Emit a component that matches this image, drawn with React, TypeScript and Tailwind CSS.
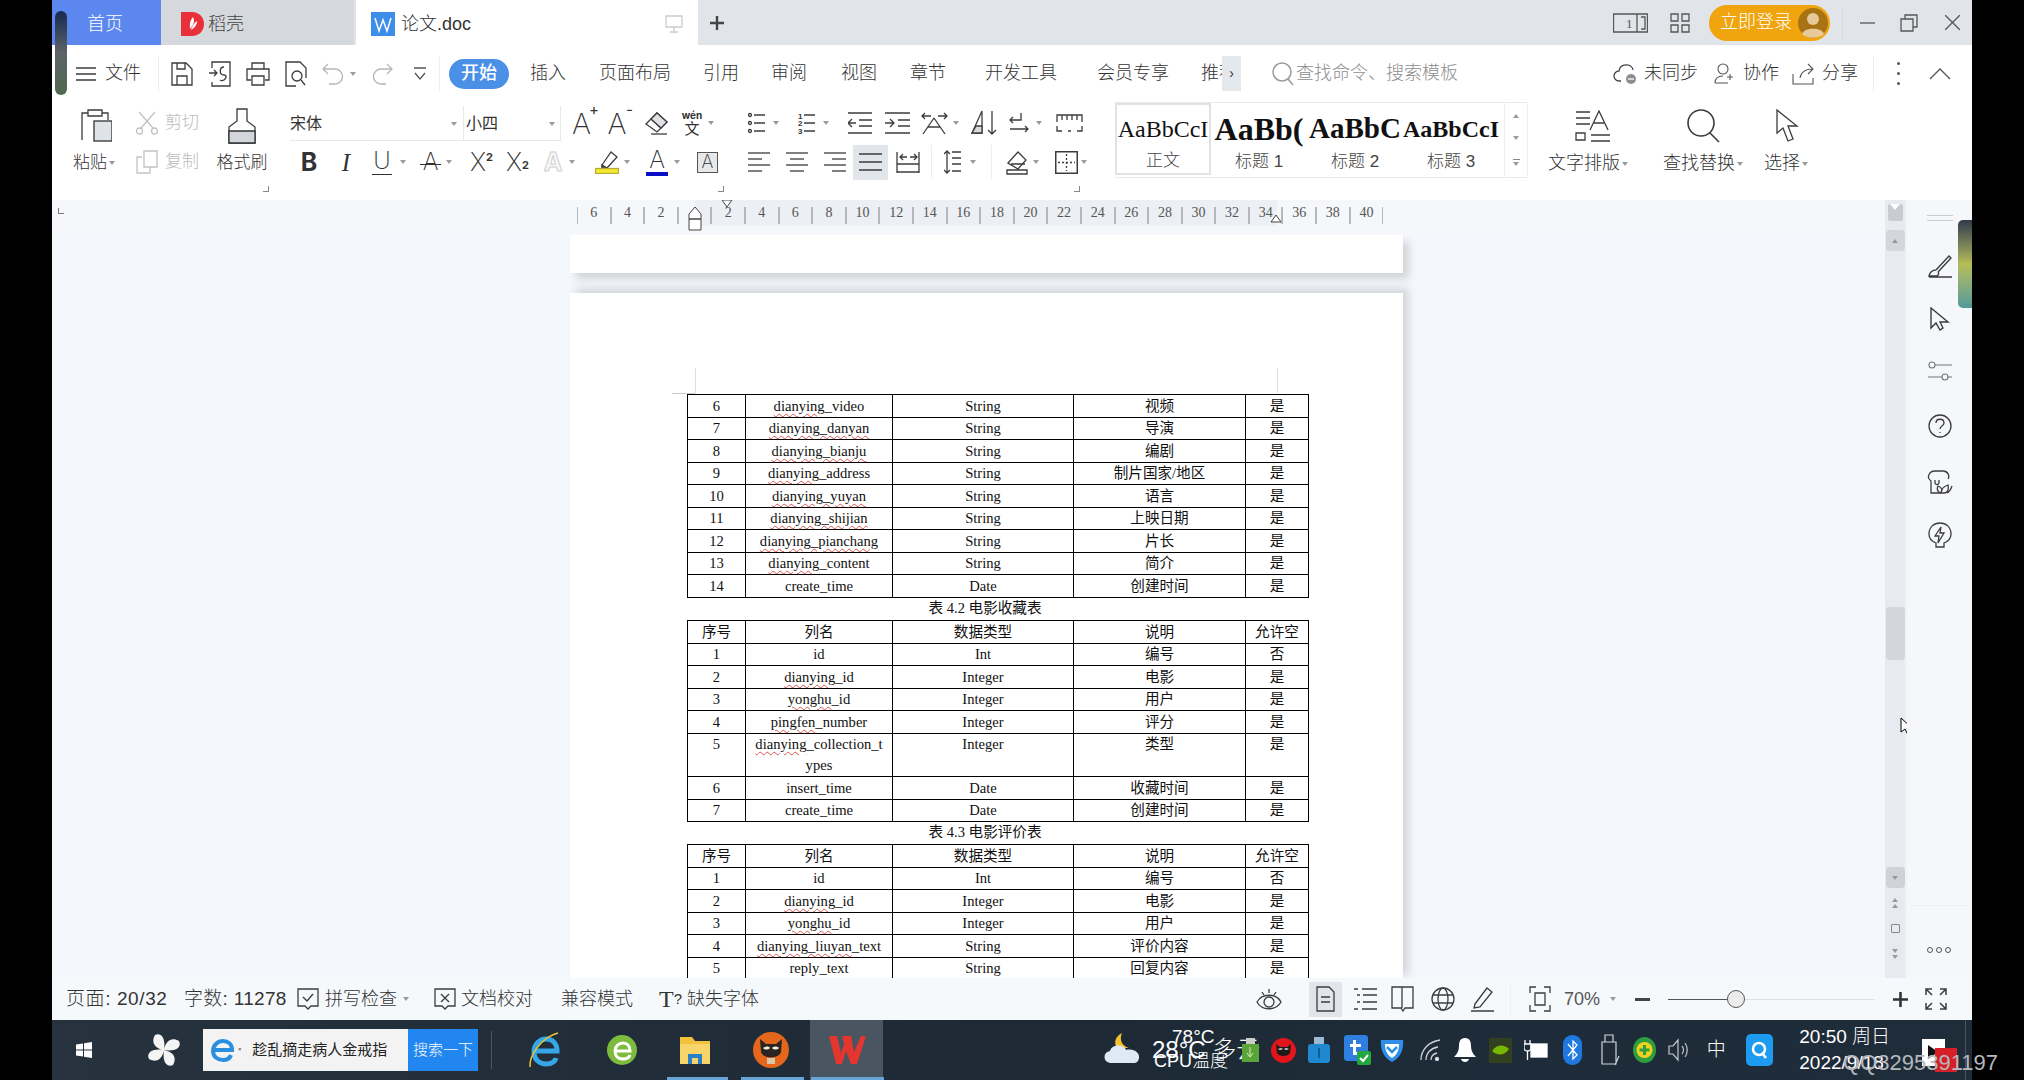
import { FC, ReactNode } from "react";
import clsx from "clsx";

const Svg: FC<{ w: number; h: number; className?: string; stroke?: string; sw?: number; children: ReactNode }> = ({
  w,
  h,
  className,
  stroke = "#3c3c3c",
  sw = 1.3,
  children,
}) => (
  <svg
    width={w}
    height={h}
    viewBox={`0 0 ${w} ${h}`}
    fill="none"
    stroke={stroke}
    strokeWidth={sw}
    className={clsx("shrink-0", className)}
  >
    {children}
  </svg>
);

const Caret: FC<{ className?: string }> = ({ className }) => (
  <span
    className={clsx(
      "h-0 w-0 shrink-0 border-x-[3.5px] border-t-[4px] border-x-transparent border-t-[#9a9a9a]",
      className,
    )}
  />
);

const Sep: FC<{ className?: string }> = ({ className }) => (
  <span className={clsx("h-[34px] w-px shrink-0 bg-[#eceef1]", className)} />
);

const Corner: FC<{ className?: string }> = ({ className }) => (
  <span className={clsx("absolute h-[6px] w-[6px] border-r border-b border-[#888]", className)} />
);

const Lines: FC<{ rows: [number, number][]; w?: number; h?: number }> = ({ rows, w = 22, h = 22 }) => (
  <Svg w={w} h={h}>
    {rows.map(([a, b], i) => (
      <path key={i} d={`M${a} ${2 + (i * (h - 4)) / (rows.length - 1)}H${b}`} />
    ))}
  </Svg>
);

const TitleBar = () => (
  <div className="flex h-[45px] items-stretch bg-[#e1e4e8]">
    <div className="flex w-[109px] items-center bg-[#5b87ee] pt-[3px] pl-[35px] text-[18px] font-light text-white">首页</div>
    <div className="flex w-[193px] items-center bg-[#d5d8dc] pt-[3px] pl-[20px] text-[18px] font-light text-[#444]">
      <svg width="23" height="26" viewBox="0 0 23 26" className="shrink-0">
        <path d="M0 1h11c7 0 12 5 12 12s-5 12-12 12H0z" fill="#e8303a" />
        <path d="M12 6c2 4 1 7-3 12 0-4-1-7 3-12zM16 10c0 4-2 6-6 9 1-4 3-7 6-9z" fill="#fff" />
      </svg>
      <span className="ml-[4px]">稻壳</span>
    </div>
    <div className="ml-[2px] flex w-[342px] items-center bg-white pt-[3px] pl-[15px] text-[18px] text-[#333]">
      <svg width="24" height="24" viewBox="0 0 24 24" className="shrink-0">
        <rect width="24" height="24" fill="#3d8ee8" />
        <path d="M4 6l4 13 4-11 4 11 4-13" fill="none" stroke="#fff" strokeWidth="1.5" />
      </svg>
      <span className="ml-[6px] font-light">论文.doc</span>
      <Svg w={18} h={18} stroke="#c8cbd0" className="ml-[194px]">
        <path d="M1 1h16v11H1zM9 12v4M5 17h8" />
      </Svg>
    </div>
    <div className="ml-[12px] flex items-center">
      <Svg w={14} h={14} sw={2.4} stroke="#444">
        <path d="M7 0v14M0 7h14" />
      </Svg>
    </div>
    <div className="ml-auto flex items-center pr-[12px]">
      <Svg w={35} h={20} className="mr-[22px]" stroke="#555">
        <path d="M.5 1h34v18H.5zM24 1v18M28 4h4v12h-4" />
        <text x="13" y="15" fontSize="13" fill="#555" stroke="none" fontFamily="Liberation Serif">1</text>
      </Svg>
      <Svg w={20} h={20} stroke="#555" className="mr-[19px]">
        <path d="M1 1h7v7H1zM12 1h7v7h-7zM1 12h7v7H1zM12 12h7v7h-7z" />
      </Svg>
      <div className="flex h-[36px] w-[121px] items-center rounded-full bg-[#f0a40e] pl-[11px] text-[18px] font-light text-white">
        立即登录
        <svg width="30" height="30" viewBox="0 0 30 30" className="ml-[6px] shrink-0">
          <circle cx="15" cy="15" r="15" fill="#a87413" />
          <circle cx="15" cy="11" r="6" fill="#e8c99a" />
          <path d="M4 26c2-7 20-7 22 0-5 5-17 5-22 0z" fill="#e8c99a" />
        </svg>
      </div>
      <span className="ml-[12px] h-[30px] w-px bg-[#d6d8dc]" />
      <Svg w={15} h={15} stroke="#555" className="ml-[17px]">
        <path d="M0 8h15" />
      </Svg>
      <Svg w={18} h={18} stroke="#555" className="ml-[25px]">
        <path d="M1 5h12v12H1zM5 5V1h12v12h-4" />
      </Svg>
      <Svg w={15} h={15} stroke="#555" className="ml-[27px]">
        <path d="M0 0l15 15M15 0L0 15" />
      </Svg>
    </div>
  </div>
);

const MenuItem: FC<{ className: string; children: ReactNode }> = ({ className, children }) => (
  <span className={clsx("shrink-0 font-light whitespace-nowrap", className)}>{children}</span>
);

const MenuBar = () => (
  <div className="flex h-[53px] items-center bg-white pt-[4px] text-[18px] text-[#333]">
    <Svg w={22} h={16} className="ml-[23px]" sw={1.6}>
      <path d="M1 2h20M1 8h20M1 14h20" />
    </Svg>
    <MenuItem className="ml-[8px]">文件</MenuItem>
    <Sep className="ml-[17px]" />
    <Svg w={24} h={24} className="ml-[11px]">
      <path d="M2 1h14l6 6v16H2zM7 23v-9h10v9M7 1v6h8V1" />
    </Svg>
    <Svg w={24} h={26} className="ml-[14px]">
      <path d="M4 7V1h18v24H4v-4M1 12h8M6 9l3 3-3 3M16 6c-5 0-5 8 0 8s0 8-4 5" />
    </Svg>
    <Svg w={24} h={24} className="ml-[14px]">
      <path d="M6 7V1h12v6M5 18H1V7h22v11h-4M6 14h12v9H6z" />
    </Svg>
    <Svg w={24} h={26} className="ml-[14px]">
      <path d="M12 25H2V1h14l6 6v10" />
      <circle cx="13" cy="15" r="5" />
      <path d="M17 19l4 5" />
    </Svg>
    <Svg w={22} h={22} stroke="#b4b7bb" className="ml-[14px]">
      <path d="M6 1L1 6l5 5M1 6h12a7 7 0 0 1 0 15H7" />
    </Svg>
    <Caret className="ml-[6px]" />
    <Svg w={20} h={22} stroke="#b4b7bb" className="ml-[17px]">
      <path d="M14 1l5 5-5 5M19 6H8a7 7 0 0 0 0 15h5" />
    </Svg>
    <Svg w={14} h={14} className="ml-[20px]" stroke="#555">
      <path d="M1 1h12M2 6l5 6 5-6" />
    </Svg>
    <Sep className="ml-[12px]" />
    <span className="ml-[9px] flex h-[30px] w-[60px] shrink-0 items-center justify-center rounded-full bg-[#4a90e6] font-medium text-white">
      开始
    </span>
    <MenuItem className="ml-[21px]">插入</MenuItem>
    <MenuItem className="ml-[33px]">页面布局</MenuItem>
    <MenuItem className="ml-[32px]">引用</MenuItem>
    <MenuItem className="ml-[32px]">审阅</MenuItem>
    <MenuItem className="ml-[34px]">视图</MenuItem>
    <MenuItem className="ml-[33px]">章节</MenuItem>
    <MenuItem className="ml-[39px]">开发工具</MenuItem>
    <MenuItem className="ml-[40px]">会员专享</MenuItem>
    <span className="ml-[32px] w-[21px] shrink-0 overflow-hidden font-light whitespace-nowrap">推荐</span>
    <span className="flex h-[35px] w-[19px] shrink-0 items-center justify-center bg-[#e4e7ec] text-[14px]">›</span>
    <Svg w={22} h={24} stroke="#9a9a9a" className="ml-[31px]" sw={1.5}>
      <circle cx="10" cy="10" r="9" />
      <path d="M16 17l5 6" />
    </Svg>
    <MenuItem className="ml-[2px] text-[#8d8d8d]">查找命令、搜索模板</MenuItem>
    <div className="ml-auto flex items-center pr-[21px]">
      <Svg w={25} h={22} stroke="#444">
        <path d="M8 18H6a5 5 0 0 1 0-10c1-8 13-8 14-1" />
        <circle cx="18" cy="16" r="5" fill="#8a8d92" stroke="none" />
        <path d="M15 16h6" stroke="#fff" />
      </Svg>
      <MenuItem className="ml-[6px]">未同步</MenuItem>
      <Svg w={22} h={22} stroke="#555" sw={1.1} className="ml-[15px]">
        <circle cx="10" cy="6" r="5" />
        <path d="M2 20c0-5 3-7 8-7M2 20h13M17 11v6M14 14h6" />
      </Svg>
      <MenuItem className="ml-[8px]">协作</MenuItem>
      <Svg w={24} h={22} stroke="#555" sw={1.1} className="ml-[13px]">
        <path d="M1 11v10h20v-6M8 15c1-6 6-9 12-9M16 1l5 5-5 5" />
      </Svg>
      <MenuItem className="ml-[6px]">分享</MenuItem>
      <Sep className="ml-[15px]" />
      <span className="ml-[23px] flex w-[3px] flex-col gap-[7px]">
        <i className="h-[3px] w-[3px] rounded-full bg-[#555]" />
        <i className="h-[3px] w-[3px] rounded-full bg-[#555]" />
        <i className="h-[3px] w-[3px] rounded-full bg-[#555]" />
      </span>
      <Svg w={22} h={12} stroke="#555" className="ml-[29px]">
        <path d="M1 11L11 1l10 10" />
      </Svg>
    </div>
  </div>
);

const Glyph: FC<{ className: string; children: ReactNode }> = ({ className, children }) => (
  <span className={clsx("relative flex shrink-0 items-center justify-center leading-none text-[#333]", className)}>
    {children}
  </span>
);

const FontGroup = () => (
  <div className="relative ml-[22px] w-[435px] shrink-0">
    <div className="flex h-[40px] items-center pt-[2px]">
      <div className="flex h-[35px] w-[173px] shrink-0 items-center justify-between border-b border-[#e8e8e8] pt-[2px] pr-[6px] text-[16px]">
        宋体
        <Caret />
      </div>
      <div className="flex h-[35px] w-[98px] shrink-0 items-center justify-between border-x border-b border-[#e8e8e8] pt-[2px] pr-[5px] pl-[2px] text-[16px]">
        小四
        <Caret />
      </div>
      <Glyph className="ml-[9px] w-[23px] font-['Inter'] text-[29px] font-extralight">
        A<sup className="absolute top-[1px] -right-[6px] text-[15px] font-normal">+</sup>
      </Glyph>
      <Glyph className="ml-[13px] w-[22px] font-['Inter'] text-[29px] font-extralight">
        A<sup className="absolute top-[1px] -right-[5px] text-[15px] font-normal">-</sup>
      </Glyph>
      <Svg w={24} h={24} className="ml-[17px]">
        <path d="M1 13L12 2l10 9-10 10zM6 8l10 9" />
        <path d="M12 2l10 9-6 6-10-9z" fill="#dde0e4" />
        <path d="M6 23h16" />
      </Svg>
      <span className="ml-[11px] flex w-[24px] shrink-0 flex-col items-center text-[#333]">
        <span className="font-['Inter'] text-[10px] leading-[11px] font-bold">wén</span>
        <span className="text-[15px] leading-[15px]">文</span>
      </span>
      <Caret className="ml-[4px]" />
    </div>
    <div className="flex h-[40px] items-center">
      <Glyph className="ml-[10px] w-[18px] font-['Inter'] text-[25px] font-bold">B</Glyph>
      <Glyph className="ml-[22px] w-[12px] font-['Liberation_Serif'] text-[25px] italic">I</Glyph>
      <Glyph className="ml-[20px] h-[26px] w-[20px] items-start border-b border-[#333] font-['Inter'] text-[24px] font-extralight">
        U
      </Glyph>
      <Caret className="ml-[8px]" />
      <Glyph className="ml-[14px] w-[21px] font-['Inter'] text-[24px] font-extralight">
        A<i className="absolute top-[14px] left-0 h-px w-[21px] bg-[#333]" />
      </Glyph>
      <Caret className="ml-[5px]" />
      <Glyph className="ml-[16px] w-[27px] font-['Inter'] text-[25px] font-extralight">
        X<sup className="text-[11px] font-bold">2</sup>
      </Glyph>
      <Glyph className="ml-[10px] w-[25px] font-['Inter'] text-[25px] font-extralight">
        X<sub className="text-[11px] font-bold">2</sub>
      </Glyph>
      <span className="ml-[13px] w-[20px] shrink-0 text-center font-['Inter'] text-[25px] leading-none font-bold text-[#f7f7f7] [-webkit-text-stroke:1px_#cfd1d4]">
        A
      </span>
      <Caret className="ml-[6px]" />
      <Svg w={24} h={24} className="ml-[20px]">
        <path d="M7 15L16 2l6 5-10 11-5-1z" />
        <path d="M7 15l5 3-2 1H7z" fill="#555" />
        <rect x="0.5" y="18.5" width="23" height="5" fill="#f2ea2e" stroke="#b9a93a" />
      </Svg>
      <Caret className="ml-[5px]" />
      <Glyph className="ml-[16px] h-[28px] w-[22px] items-start border-b-[4px] border-[#0b10c4] font-['Inter'] text-[24px] font-extralight">
        A
      </Glyph>
      <Caret className="ml-[6px]" />
      <Glyph className="ml-[17px] h-[21px] w-[21px] border border-[#555] bg-[#e6e8ea] font-['Inter'] text-[18px] font-extralight">
        A
      </Glyph>
    </div>
    <Corner className="top-[84px] right-[1px]" />
  </div>
);

const ParagraphGroup = () => (
  <div className="relative ml-[23px] w-[347px] shrink-0">
    <div className="flex h-[40px] items-center pt-[2px]">
      <Svg w={17} h={22}>
        <circle cx="2" cy="3" r="1.5" />
        <circle cx="2" cy="11" r="1.5" />
        <circle cx="2" cy="19" r="1.5" />
        <path d="M6 3h11M6 11h11M6 19h11" />
      </Svg>
      <Caret className="ml-[8px]" />
      <Svg w={17} h={22} className="ml-[19px]">
        <path d="M6 3h11M6 11h11M6 19h11" />
        <text x="0" y="7" fontSize="8" fontWeight="700" stroke="none" fill="#333">1</text>
        <text x="0" y="14" fontSize="8" fontWeight="700" stroke="none" fill="#333">2</text>
        <text x="0" y="22" fontSize="8" fontWeight="700" stroke="none" fill="#333">3</text>
      </Svg>
      <Caret className="ml-[8px]" />
      <Svg w={24} h={22} className="ml-[19px]">
        <path d="M0 1h24M11 8h13M11 14h13M0 21h24M0 11h8M4 7l-4 4 4 4" />
      </Svg>
      <Svg w={25} h={22} className="ml-[13px]">
        <path d="M0 1h25M13 8h12M13 14h12M0 21h25M0 11h9M5 7l4 4-4 4" />
      </Svg>
      <Svg w={27} h={24} className="ml-[11px]">
        <path d="M1 5h9M4 2L1 5l3 3M17 5h9M23 2l3 3-3 3M13 7L2 23M13 7l11 16M7 16h12" />
      </Svg>
      <Caret className="ml-[5px]" />
      <Svg w={26} h={26} className="ml-[12px]">
        <path d="M11 1v22H1zM21 1v23M17 20l4 4 4-4" />
        <path d="M5 16h6v7H1z" fill="#d6d9dd" />
      </Svg>
      <Svg w={20} h={22} className="ml-[12px]">
        <path d="M12 1v7H1M4 5L1 8l3 3M1 17h18M16 14l3 3-3 3" />
      </Svg>
      <Caret className="ml-[7px]" />
      <Svg w={27} h={20} className="ml-[14px]">
        <path d="M1 9V2h25v7M6 2v5M11 2v5M16 2v5M21 2v5M1 13v5h5M26 13v5h-5M12 18h3" />
      </Svg>
    </div>
    <div className="flex h-[40px] items-center">
      <Lines rows={[[0, 22], [0, 14], [0, 22], [0, 14]]} />
      <Lines rows={[[16, 38], [20, 34], [16, 38], [20, 34]]} w={38} />
      <Lines rows={[[16, 38], [24, 38], [16, 38], [24, 38]]} w={38} />
      <span className="ml-[7px] flex h-[35px] w-[35px] shrink-0 items-center justify-center bg-[#e2e5ea]">
        <Svg w={23} h={20} sw={1.6}>
          <path d="M0 2h23M0 10h23M0 18h23" />
        </Svg>
      </span>
      <Svg w={24} h={24} className="ml-[8px]">
        <path d="M1 2v21M23 2v21M1 14h22M1 22h22M4 7h7M7 4L4 7l3 3M14 7h7M18 4l3 3-3 3" />
      </Svg>
      <Sep className="ml-[11px]" />
      <Svg w={17} h={26} className="ml-[12px]">
        <path d="M3 2v22M0 5l3-3 3 3M0 21l3 3 3-3M8 3h9M8 9h9M8 15h9M8 22h9" />
      </Svg>
      <Caret className="ml-[9px]" />
      <Sep className="ml-[15px]" />
      <Svg w={22} h={25} className="ml-[14px]">
        <path d="M2 13L12 2l8 8-8 9zM5 14h14M1 24v-4h20v4z" />
      </Svg>
      <Caret className="ml-[5px]" />
      <Svg w={23} h={23} className="ml-[16px]">
        <path d="M.7.7h21.6v21.6H.7z" strokeWidth="1.6" />
        <path d="M11.5 3v17M3 11.5h17" strokeDasharray="2 2" />
      </Svg>
      <Caret className="ml-[3px]" />
    </div>
    <Corner className="top-[84px] right-[15px]" />
  </div>
);

const StyleTile: FC<{ label: string; className: string; active?: boolean; children: string }> = ({
  label,
  className,
  active,
  children,
}) => (
  <div
    className={clsx(
      "flex h-[72px] w-[96px] shrink-0 flex-col items-center overflow-hidden",
      active && "border-2 border-[#e1e2e4]",
    )}
  >
    <div className={clsx("flex h-[46px] w-full items-center justify-center pt-[6px] font-['Liberation_Serif'] whitespace-nowrap text-[#111]", className)}>
      {children}
    </div>
    <span className="text-[17px] font-light text-[#444]">{label}</span>
  </div>
);

const Ribbon = () => (
  <div className="flex h-[102px] items-start bg-white pt-[4px] text-[#333]">
    <div className="ml-[19px] flex w-[46px] shrink-0 flex-col items-center">
      <Svg w={32} h={34} className="mt-[6px] ml-[3px]">
        <path d="M2 32V5h6M22 5h6v7M8 2h14v6H8z" />
        <rect x="14" y="13" width="18" height="20" fill="#dfe2e6" stroke="#333" />
      </Svg>
      <span className="mt-[8px] flex items-center text-[17px] font-light">
        粘贴
        <Caret className="ml-[2px]" />
      </span>
    </div>
    <div className="ml-[19px] w-[66px] shrink-0 text-[17px] font-light text-[#bbb]">
      <div className="flex h-[40px] items-center gap-[7px] pt-[2px]">
        <Svg w={22} h={24} stroke="#c0c2c5">
          <path d="M3 1l14 16M19 1L5 17" />
          <circle cx="3.5" cy="20" r="3" />
          <circle cx="18.5" cy="20" r="3" />
        </Svg>
        剪切
      </div>
      <div className="flex h-[40px] items-center gap-[7px]">
        <Svg w={22} h={24} stroke="#c0c2c5">
          <path d="M8 1h13v16H8zM6 7H1v16h13v-6" />
        </Svg>
        复制
      </div>
    </div>
    <div className="relative ml-[14px] flex w-[52px] shrink-0 flex-col items-center">
      <Svg w={28} h={36} className="mt-[6px]">
        <path d="M9 1h10v12l8 6v16H1V19l8-6z" />
        <path d="M1 23h26v12H1z" fill="#d3d6da" stroke="#333" />
      </Svg>
      <span className="mt-[6px] text-[17px] font-light whitespace-nowrap">格式刷</span>
      <Corner className="top-[84px] -right-[1px]" />
    </div>
    <FontGroup />
    <ParagraphGroup />
    <div className="ml-[20px] flex h-[76px] w-[413px] shrink-0 border-y border-[#eaeaea] border-r-0">
      <StyleTile label="正文" className="text-[24px]" active>
        AaBbCcI
      </StyleTile>
      <StyleTile label="标题 1" className="text-[32px] font-bold">
        AaBb(
      </StyleTile>
      <StyleTile label="标题 2" className="text-[29px] font-bold">
        AaBbC
      </StyleTile>
      <StyleTile label="标题 3" className="text-[24px] font-bold">
        AaBbCcI
      </StyleTile>
      <div className="ml-auto flex w-[24px] flex-col items-center justify-around border-x border-[#eee] py-[2px]">
        <Caret className="rotate-180" />
        <Caret />
        <span className="flex flex-col items-center gap-[2px]">
          <i className="h-px w-[7px] bg-[#888]" />
          <Caret />
        </span>
      </div>
    </div>
    <div className="ml-[22px] flex w-[76px] shrink-0 flex-col items-center">
      <Svg w={36} h={32} className="mt-[8px] ml-[10px]">
        <path d="M1 2h14M1 8h14M1 14h14M15 20L24 1l9 19M19 13h10" />
        <path d="M1 23h9v7H1zM16 25h19M16 31h19" />
      </Svg>
      <span className="mt-[8px] flex items-center text-[18px] font-light whitespace-nowrap">
        文字排版
        <Caret className="ml-[2px]" />
      </span>
    </div>
    <div className="ml-[38px] flex w-[78px] shrink-0 flex-col items-center">
      <Svg w={34} h={34} sw={1.6} className="mt-[7px] ml-[2px]">
        <circle cx="14" cy="14" r="13" />
        <path d="M23 24l9 9" />
      </Svg>
      <span className="mt-[7px] flex items-center text-[18px] font-light whitespace-nowrap">
        查找替换
        <Caret className="ml-[2px]" />
      </span>
    </div>
    <div className="ml-[22px] flex w-[44px] shrink-0 flex-col items-center">
      <Svg w={24} h={34} className="mt-[7px] ml-[2px]">
        <path d="M2 1v23l6-5 5 13 5-2-5-13h9z" />
      </Svg>
      <span className="mt-[7px] flex items-center text-[18px] font-light whitespace-nowrap">
        选择
        <Caret className="ml-[2px]" />
      </span>
    </div>
  </div>
);

const RULER = ["6", "4", "2", "", "2", "4", "6", "8", "10", "12", "14", "16", "18", "20", "22", "24", "26", "28", "30", "32", "34", "36", "38", "40"];

const Ruler = () => (
  <div className="relative flex h-[35px] shrink-0 items-start bg-[#f5f7fa] pl-[525px]">
    <span className="absolute top-[8px] left-[6px] h-[6px] w-[6px] border-b border-l border-[#777]" />
    <span className="absolute top-0 left-[643px] h-[26px] w-[582px] bg-[#eceff3]" />
    {RULER.map((n, i) => (
      <span
        key={i}
        className="relative mt-[7px] flex h-[17px] w-[33.6px] shrink-0 items-start justify-center border-x border-[#b5b9bf] font-['Liberation_Serif'] text-[14px] leading-[12px] text-[#555]"
      >
        {n}
      </span>
    ))}
    <Svg w={14} h={26} className="absolute top-[6px] left-[636px]" stroke="#444" sw={1}>
      <path d="M7 1l6 7v5H1V8zM1 13h12v11H1z" fill="#fff" />
    </Svg>
    <Svg w={12} h={8} className="absolute top-0 left-[669px]" stroke="#444" sw={1}>
      <path d="M1 0h10L6 7z" fill="#fff" />
    </Svg>
    <Svg w={12} h={8} className="absolute top-[15px] left-[1218px]" stroke="#444" sw={1}>
      <path d="M1 7h10L6 0z" fill="#fff" />
    </Svg>
  </div>
);

type Row = [string, string, string, string, string];

const Name: FC<{ value: string }> = ({ value }) => {
  const [wavy, rest] = value.split("|");
  if (rest === undefined) return <>{value}</>;
  return (
    <>
      <span className="underline decoration-[#d9534f] decoration-wavy decoration-1 underline-offset-[2px]">{wavy}</span>
      {rest}
    </>
  );
};

const DocTable: FC<{ rows: Row[] }> = ({ rows }) => (
  <table className="w-[621px] table-fixed border-collapse border border-black text-center">
    <colgroup>
      <col className="w-[58px]" />
      <col className="w-[147px]" />
      <col className="w-[181px]" />
      <col className="w-[172px]" />
      <col className="w-[63px]" />
    </colgroup>
    <tbody>
      {rows.map((row, i) => {
        const tall = row[1].includes("\n");
        return (
          <tr key={i} className={tall ? "h-[43px]" : i % 2 === 0 ? "h-[23px]" : "h-[22px]"}>
            {row.map((cell, j) => (
              <td
                key={j}
                className={clsx("border border-black p-0", tall ? "align-top leading-[21px]" : "pb-[1px] align-middle leading-[20px]")}
              >
                {cell.split("\n").map((line, k) => (
                  <div key={k}>
                    <Name value={line} />
                  </div>
                ))}
              </td>
            ))}
          </tr>
        );
      })}
    </tbody>
  </table>
);

const HEAD: Row = ["序号", "列名", "数据类型", "说明", "允许空"];

const T1: Row[] = [
  ["6", "dianying|_video", "String", "视频", "是"],
  ["7", "dianying_danyan|", "String", "导演", "是"],
  ["8", "dianying_bianju|", "String", "编剧", "是"],
  ["9", "dianying|_address", "String", "制片国家/地区", "是"],
  ["10", "dianying_yuyan|", "String", "语言", "是"],
  ["11", "dianying_shijian|", "String", "上映日期", "是"],
  ["12", "dianying_pianchang|", "String", "片长", "是"],
  ["13", "dianying|_content", "String", "简介", "是"],
  ["14", "create_time", "Date", "创建时间", "是"],
];

const T2: Row[] = [
  HEAD,
  ["1", "id", "Int", "编号", "否"],
  ["2", "dianying|_id", "Integer", "电影", "是"],
  ["3", "yonghu|_id", "Integer", "用户", "是"],
  ["4", "pingfen|_number", "Integer", "评分", "是"],
  ["5", "dianying|_collection_t\nypes", "Integer", "类型", "是"],
  ["6", "insert_time", "Date", "收藏时间", "是"],
  ["7", "create_time", "Date", "创建时间", "是"],
];

const T3: Row[] = [
  HEAD,
  ["1", "id", "Int", "编号", "否"],
  ["2", "dianying|_id", "Integer", "电影", "是"],
  ["3", "yonghu|_id", "Integer", "用户", "是"],
  ["4", "dianying_liuyan|_text", "String", "评价内容", "是"],
  ["5", "reply_text", "String", "回复内容", "是"],
];

const Caption: FC<{ children: string }> = ({ children }) => (
  <div className="h-[22px] w-[621px] pr-[25px] text-center leading-[20px]">{children}</div>
);

const Document = () => (
  <div className="flex min-h-0 flex-1 flex-col overflow-hidden bg-[#f4f7fb] pl-[518px]">
    <div className="h-[38px] w-[833px] shrink-0 bg-white shadow-[6px_6px_8px_rgba(0,0,0,0.14)]" />
    <div className="relative mt-[20px] w-[833px] flex-1 bg-white pt-[101px] pl-[117px] font-['Liberation_Serif','Noto_Sans_CJK_SC',serif] text-[14.6px] text-[#111] shadow-[6px_-5px_8px_rgba(0,0,0,0.13)]">
      <span className="absolute top-[75px] left-[125px] h-[25px] w-px bg-[#ddd]" />
      <span className="absolute top-[100px] left-[102px] h-px w-[23px] bg-[#ccc]" />
      <span className="absolute top-[75px] left-[707px] h-[25px] w-px bg-[#ddd]" />
      <DocTable rows={T1} />
      <Caption>表 4.2 电影收藏表</Caption>
      <DocTable rows={T2} />
      <Caption>表 4.3 电影评价表</Caption>
      <DocTable rows={T3} />
    </div>
  </div>
);

const Scrollbar = () => (
  <div className="relative flex w-[22px] shrink-0 flex-col items-center border-r-[2px] border-[#f1f2f5] bg-[#e7eaf0] pt-[4px]">
    <span className="flex h-[17px] w-[15px] items-start justify-center rounded-[2px] bg-[#c9ccd2]">
      <i className="h-0 w-0 border-x-[5px] border-t-[6px] border-x-transparent border-t-white" />
    </span>
    <span className="mt-[9px] flex h-[21px] w-[19px] items-center justify-center rounded-[4px] bg-[#d3d6dc]">
      <Caret className="rotate-180" />
    </span>
    <span className="mt-[356px] h-[53px] w-[19px] rounded-[4px] bg-[#d3d6dc]" />
    <span className="mt-[207px] flex h-[21px] w-[19px] items-center justify-center rounded-[4px] bg-[#cfd2d8]">
      <Caret />
    </span>
    <span className="mt-[10px] flex flex-col items-center gap-[2px]">
      <Caret className="rotate-180" />
      <Caret className="rotate-180" />
    </span>
    <span className="mt-[16px] h-[9px] w-[9px] rounded-[1px] border border-[#888]" />
    <span className="mt-[16px] flex flex-col items-center gap-[2px]">
      <Caret />
      <Caret />
    </span>
    <Svg w={13} h={20} className="absolute top-[517px] left-[15px]" stroke="#000" sw={1}>
      <path d="M1 1v14l4-3 3 6 2-1-3-6h5z" fill="#fff" />
    </Svg>
  </div>
);

const SideBar = () => (
  <div className="relative flex w-[65px] shrink-0 flex-col items-center bg-[#f5f7fa] pt-[15px]">
    <span className="flex flex-col gap-[4px]">
      <i className="h-px w-[26px] bg-[#ccc]" />
      <i className="h-px w-[26px] bg-[#ccc]" />
    </span>
    <Svg w={24} h={24} className="mt-[33px]" sw={1.4}>
      <path d="M8 16L21 2l2 2-13 14M8 16c-4 0-6 2-7 6h8c2-1 2-3 1-4M1 23h23" />
    </Svg>
    <Svg w={20} h={24} className="mt-[29px]" sw={1.4}>
      <path d="M1 1v20l5-5 4 7 3-2-3-6h8z" />
    </Svg>
    <Svg w={26} h={20} className="mt-[30px]" stroke="#777" sw={1.1}>
      <circle cx="5" cy="4" r="3" />
      <circle cx="18" cy="16" r="3" />
      <path d="M8 4h17M1 16h14M21 16h4" />
    </Svg>
    <Svg w={24} h={24} className="mt-[33px]" sw={1.3}>
      <circle cx="12" cy="12" r="11" />
      <path d="M8 9c0-5 8-5 8 0 0 3-4 3-4 6M12 18v1" />
    </Svg>
    <Svg w={26} h={26} className="mt-[32px]" sw={1.3}>
      <path d="M14 23H4V11c-5-3-2-10 4-10h8c5 0 7 5 5 8M8 10v3c0 2 4 2 4 0v-3" />
      <path d="M14 23c0-5 4-7 7-8 1 4 0 8-4 8zM20 23c2-1 4-4 5-7M13 23c-3-2-3-5-2-7 3 1 4 3 4 5" />
    </Svg>
    <Svg w={24} h={26} className="mt-[26px]" sw={1.3}>
      <path d="M8 25v-4C3 19 1 15 1 12 1 5 6 1 12 1s11 4 11 11c0 3-2 7-7 9v4zM13 5l-6 9h4l-1 7 6-10h-4z" />
    </Svg>
    <span className="absolute top-[705px] left-[4px] h-px w-[56px] bg-[#eceef1]" />
    <span className="absolute top-[747px] left-[20px] flex gap-[3px]">
      <i className="h-[6px] w-[6px] rounded-full border-[1.5px] border-[#555]" />
      <i className="h-[6px] w-[6px] rounded-full border-[1.5px] border-[#555]" />
      <i className="h-[6px] w-[6px] rounded-full border-[1.5px] border-[#555]" />
    </span>
  </div>
);

const StatusBar = () => (
  <div className="flex h-[42px] items-center bg-[#f6f9fc] text-[18px] font-light text-[#333]">
    <span className="ml-[14px] w-[118px] shrink-0 text-[19px] tracking-[0.6px] whitespace-nowrap">页面: 20/32</span>
    <span className="w-[113px] shrink-0 text-[19px] tracking-[0.3px] whitespace-nowrap">字数: 11278</span>
    <Svg w={22} h={22} className="shrink-0">
      <path d="M1 1h20v17h-7l-3 3-3-3H1zM6 9l4 4 6-7" />
    </Svg>
    <span className="ml-[6px] whitespace-nowrap">拼写检查</span>
    <Caret className="ml-[6px]" />
    <Svg w={22} h={22} className="ml-[25px]">
      <path d="M1 1h20v17h-7l-3 3-3-3H1zM7 6l8 8M15 6l-8 8" />
    </Svg>
    <span className="ml-[5px] whitespace-nowrap">文档校对</span>
    <span className="ml-[28px] whitespace-nowrap">兼容模式</span>
    <span className="ml-[26px] font-['Liberation_Serif'] text-[24px] leading-none">T</span>
    <span className="text-[15px]">?</span>
    <span className="ml-[5px] whitespace-nowrap">缺失字体</span>
    <div className="ml-auto flex items-center pr-[25px]">
      <Svg w={26} h={30}>
        <path d="M1 18c5-9 19-9 24 0-5 9-19 9-24 0z" />
        <circle cx="13" cy="18" r="5" />
        <path d="M6 8l2 3M13 5v4M20 8l-2 3" />
      </Svg>
      <span className="ml-[27px] flex h-[35px] w-[33px] items-center justify-center bg-[#e1e5ea]">
        <Svg w={19} h={26}>
          <path d="M1 1h12l5 5v19H1zM5 11h9M5 16h9" />
        </Svg>
      </span>
      <Svg w={23} h={24} className="ml-[12px]">
        <path d="M0 2h4M8 2h15M3 8h3M9 8h14M3 15h3M9 15h14M0 22h4M8 22h15" />
      </Svg>
      <Svg w={23} h={26} className="ml-[14px]">
        <path d="M1 1h21v21h-8l-2 3-2-3H1zM11 1v21" />
      </Svg>
      <Svg w={24} h={24} className="ml-[17px]">
        <circle cx="12" cy="12" r="11" />
        <ellipse cx="12" cy="12" rx="5" ry="11" />
        <path d="M2 8h20M2 16h20" />
      </Svg>
      <Svg w={25} h={26} className="ml-[15px]">
        <path d="M5 18L17 2l5 4-12 15-6 1zM1 25h23" />
      </Svg>
      <Sep className="ml-[15px] h-[26px]" />
      <Svg w={22} h={26} className="ml-[18px]">
        <path d="M1 7V1h6M15 1h6v6M1 19v6h6M15 25h6v-6M6 7h10v12H6z" />
      </Svg>
      <span className="ml-[13px] text-[18px] text-[#555]">70%</span>
      <Caret className="ml-[10px]" />
      <span className="ml-[19px] h-[3px] w-[15px] bg-[#444]" />
      <div className="ml-[18px] flex w-[207px] items-center">
        <span className="h-px w-[59px] bg-[#555]" />
        <span className="h-[18px] w-[18px] shrink-0 rounded-full border border-[#555] bg-[#ececec]" />
        <span className="h-px flex-1 bg-[#dfe1e5]" />
      </div>
      <Svg w={15} h={15} sw={2.6} stroke="#333" className="ml-[18px]">
        <path d="M7.5 0v15M0 7.5h15" />
      </Svg>
      <Svg w={22} h={22} sw={1.5} className="ml-[17px]">
        <path d="M1 7V1h6M1 1l6 6M21 7V1h-6M21 1l-6 6M1 15v6h6M1 21l6-6M21 15v6h-6M21 21l-6-6" />
      </Svg>
    </div>
  </div>
);

const TrayIcon: FC<{ className: string; children: ReactNode }> = ({ className, children }) => (
  <span className={clsx("relative flex shrink-0 items-center justify-center", className)}>{children}</span>
);

const Taskbar = () => (
  <div className="relative flex h-[60px] items-center bg-gradient-to-r from-[#26333f] via-[#1d2a36] to-[#1f2c3a] text-white">
    <svg width="16" height="16" viewBox="0 0 16 16" className="ml-[24px] shrink-0">
      <path d="M0 2.5l7-1v6H0zM8 1.3L16 0v7.5H8zM0 8.5h7v6l-7-1zM8 8.5h8V16l-8-1.3z" fill="#fff" />
    </svg>
    <svg width="34" height="34" viewBox="0 0 34 34" className="ml-[55px] shrink-0">
      <path d="M17 17C7 15 4 9 8 2c6-3 11 3 9 15zM17 17c2-10 8-13 15-9 3 6-3 11-15 9zM17 17c10 2 13 8 9 15-6 3-11-3-9-15zM17 17c-2 10-8 13-15 9-3-6 3-11 15-9z" fill="#f4f4f4" />
    </svg>
    <div className="ml-[22px] flex h-[42px] w-[275px] shrink-0 items-center bg-[#f3f3f3] text-[#222]">
      <svg width="24" height="26" viewBox="0 0 24 26" className="ml-[8px] shrink-0">
        <path d="M3 13h18c0-6-4-9-9-9S2 8 2 14s5 9 10 9c4 0 7-2 8-5" fill="none" stroke="#2b8fe0" strokeWidth="4" />
      </svg>
      <span className="ml-[3px] text-[9px] text-[#888]">▪</span>
      <span className="ml-[11px] text-[15px] whitespace-nowrap">趁乱摘走病人金戒指</span>
      <span className="ml-auto flex h-full w-[70px] items-center justify-center bg-[#2186f0] text-[15px] font-light text-white">搜索一下</span>
    </div>
    <span className="ml-[13px] h-[38px] w-px bg-[#4a5560]" />
    <svg width="34" height="38" viewBox="0 0 34 38" className="ml-[36px] shrink-0">
      <path d="M7 20h22c0-8-5-12-11-12S6 13 6 21s6 12 12 12c5 0 9-2 10-6" fill="none" stroke="#35a6e8" strokeWidth="5" />
      <path d="M2 36C1 24 14 6 30 2" fill="none" stroke="#e8c23a" strokeWidth="1.5" />
    </svg>
    <svg width="34" height="38" viewBox="0 0 34 38" className="ml-[43px] shrink-0">
      <circle cx="17" cy="19" r="15" fill="#7dbb3c" />
      <path d="M10 20h15c0-5-3-8-7-8s-8 3-8 8 3 8 8 8c3 0 6-1 7-4" fill="none" stroke="#fff" strokeWidth="3" />
    </svg>
    <svg width="32" height="32" viewBox="0 0 32 32" className="ml-[40px] shrink-0">
      <path d="M1 3h12l3 4h15v8H1z" fill="#f4c13d" />
      <path d="M1 10h30v20H1z" fill="#f7d56a" />
      <path d="M9 20h14v10H9z" fill="#2a7fc9" />
      <path d="M13 24h6v6h-6z" fill="#f7d56a" />
    </svg>
    <svg width="36" height="36" viewBox="0 0 36 36" className="ml-[42px] shrink-0">
      <circle cx="18" cy="18" r="18" fill="#e4671b" />
      <path d="M7 7l6 5h10l6-5-1 13c-2 7-18 7-20 0z" fill="#2a2522" />
      <path d="M10 16c3-2 6-2 7 0-2 2-5 2-7 0zM19 16c2-2 5-2 7 0-2 2-5 2-7 0z" fill="#f4ead8" />
      <rect x="14" y="26" width="8" height="6" fill="#d9c7a5" />
    </svg>
    <div className="ml-[21px] flex h-full w-[73px] shrink-0 items-center justify-center bg-[#4a5562]">
      <svg width="38" height="32" viewBox="0 0 38 32">
        <path d="M1 2h8l4 17 3-9-2-8h9l3 16L33 2h5l-9 28h-6l-5-13-4 13H8z" fill="#e2362e" />
      </svg>
    </div>
    <span className="absolute bottom-0 left-[615px] h-[3px] w-[61px] bg-[#69a4d8]" />
    <span className="absolute bottom-0 left-[689px] h-[3px] w-[63px] bg-[#69a4d8]" />
    <span className="absolute bottom-0 left-[759px] h-[3px] w-[73px] bg-[#69a4d8]" />

    <div className="relative ml-[221px] flex items-center">
      <svg width="36" height="34" viewBox="0 0 36 34" className="shrink-0">
        <path d="M18 0c-6 3-9 9-5 15h12C18 13 15 7 18 0z" fill="#f2c230" />
        <path d="M7 30a6 6 0 0 1-1-12c2-7 14-7 16-1 8-2 14 3 13 8s-4 5-6 5z" fill="#dfe9f5" />
      </svg>
      <span className="ml-[12px] text-[24px] leading-none font-light whitespace-nowrap">28°C 多云</span>
      <span className="absolute top-[-6px] left-[68px] text-[19px] leading-none font-light">78°C</span>
      <span className="absolute top-[19px] left-[50px] text-[18px] leading-none font-light whitespace-nowrap">CPU温度</span>
    </div>
    <TrayIcon className="-ml-[18px] w-[17px]">
      <svg width="17" height="24" viewBox="0 0 17 24">
        <path d="M4 0h9v6H4z" fill="#ccc" />
        <path d="M0 6h17v18H0z" fill="#5aa53a" />
        <path d="M8 9v10M5 15l3 4 3-4" stroke="#d5efb5" fill="none" />
      </svg>
    </TrayIcon>
    <TrayIcon className="ml-[12px] w-[25px]">
      <svg width="25" height="25" viewBox="0 0 25 25">
        <circle cx="12.5" cy="12.5" r="12.5" fill="#e0161c" />
        <path d="M5 6l4 3h7l4-3-1 9c-2 4-11 4-13 0z" fill="#1d1a1a" />
        <path d="M7 11c2-1 4-1 5 0-2 1-4 1-5 0zM13 11c1-1 3-1 5 0-2 1-4 1-5 0z" fill="#fff" />
      </svg>
    </TrayIcon>
    <TrayIcon className="ml-[12px] w-[22px]">
      <svg width="22" height="26" viewBox="0 0 22 26">
        <path d="M6 0h10v7H6z" fill="#9cb9d4" />
        <rect y="7" width="22" height="19" rx="3" fill="#1f88d0" />
        <path d="M11 11v10" stroke="#0d5c96" strokeWidth="2" />
      </svg>
    </TrayIcon>
    <TrayIcon className="ml-[14px] w-[27px]">
      <svg width="27" height="30" viewBox="0 0 27 30">
        <rect width="24" height="26" rx="3" fill="#2f7fe0" />
        <path d="M9 5h3v12h6v3H9zM6 9h11v3H6z" fill="#fff" />
        <rect x="13" y="16" width="14" height="14" rx="2" fill="#22a83c" />
        <path d="M16 23l3 3 5-6" stroke="#fff" strokeWidth="2" fill="none" />
      </svg>
    </TrayIcon>
    <TrayIcon className="ml-[9px] w-[24px]">
      <svg width="24" height="26" viewBox="0 0 24 26">
        <path d="M1 3h22c1 10-3 18-11 22C4 21 0 13 1 3z" fill="#2f8fe8" />
        <path d="M5 7h14c0 6-2 11-7 14C7 18 5 13 5 7z" fill="#fff" />
        <path d="M7 10l5 5 5-5" stroke="#2f8fe8" strokeWidth="2.5" fill="none" />
      </svg>
    </TrayIcon>
    <TrayIcon className="ml-[16px] w-[21px]">
      <svg width="21" height="22" viewBox="0 0 21 22" fill="none" stroke="#cfd3d8" strokeWidth="1.3">
        <path d="M1 21C1 11 8 3 20 1M6 21c0-7 5-12 12-13M11 21c0-4 2-6 6-7" />
        <circle cx="17" cy="20" r="1.5" fill="#fff" />
      </svg>
    </TrayIcon>
    <TrayIcon className="ml-[13px] w-[22px]">
      <svg width="22" height="25" viewBox="0 0 22 25">
        <path d="M11 0c5 0 6 4 6 8 0 5 2 8 5 11H0c3-3 5-6 5-11 0-4 1-8 6-8z" fill="#fff" />
        <path d="M7 21h8c-1 4-7 4-8 0z" fill="#fff" />
      </svg>
    </TrayIcon>
    <TrayIcon className="ml-[13px] w-[23px]">
      <svg width="23" height="25" viewBox="0 0 23 25">
        <rect width="23" height="25" fill="#33401f" />
        <path d="M3 13c5-7 12-7 17-2-5 7-12 7-17 2z" fill="#76b900" />
      </svg>
    </TrayIcon>
    <TrayIcon className="ml-[12px] w-[24px]">
      <svg width="24" height="22" viewBox="0 0 24 22" fill="none" stroke="#fff" strokeWidth="1.3">
        <path d="M1 1v4M6 1v4M0 5h7v4c0 2-2 3-3.5 3S0 11 0 9zM3.5 12v9" />
        <rect x="7" y="5" width="16" height="13" fill="#fff" />
      </svg>
    </TrayIcon>
    <TrayIcon className="ml-[15px] w-[19px]">
      <svg width="19" height="30" viewBox="0 0 19 30">
        <rect width="19" height="30" rx="9" fill="#1e78e0" />
        <path d="M5 9l9 11-4 4V6l4 4-9 11" stroke="#fff" fill="none" strokeWidth="1.3" />
      </svg>
    </TrayIcon>
    <TrayIcon className="ml-[19px] w-[20px]">
      <svg width="20" height="32" viewBox="0 0 20 32" fill="none" stroke="#cfd3d8" strokeWidth="1.2">
        <path d="M4 1h8v7H4zM1 8h14v22H1zM18 22l-4 9" />
      </svg>
    </TrayIcon>
    <TrayIcon className="ml-[12px] w-[23px]">
      <svg width="23" height="26" viewBox="0 0 23 26">
        <ellipse cx="11.5" cy="13" rx="11.5" ry="13" fill="#2f9e3e" />
        <circle cx="11.5" cy="13" r="8" fill="#f0d21e" />
        <path d="M11.5 8v10M6.5 13h10" stroke="#2f9e3e" strokeWidth="3" />
      </svg>
    </TrayIcon>
    <TrayIcon className="ml-[12px] w-[23px]">
      <svg width="23" height="24" viewBox="0 0 23 24" fill="none" stroke="#c3c7cc" strokeWidth="1.2">
        <path d="M1 8h4l5-6v20l-5-6H1zM14 8c2 2 2 6 0 8M17 5c3 4 3 10 0 14" />
      </svg>
    </TrayIcon>
    <span className="ml-[15px] w-[20px] text-center text-[19px] font-light">中</span>
    <TrayIcon className="ml-[20px] w-[27px]">
      <svg width="27" height="32" viewBox="0 0 27 32">
        <rect width="27" height="32" rx="5" fill="#1d9bf0" />
        <circle cx="13" cy="15" r="6" fill="none" stroke="#fff" strokeWidth="2.5" />
        <path d="M16 19l4 5" stroke="#fff" strokeWidth="2.5" />
      </svg>
    </TrayIcon>
    <div className="ml-[26px] flex w-[100px] shrink-0 flex-col text-[19px] leading-[26px] font-light whitespace-nowrap">
      <span>20:50 周日</span>
      <span>2022/9/18</span>
    </div>
    <span className="absolute top-[0px] right-[6px] h-full w-px bg-[#4b5560]" />
    <span className="absolute top-[19px] right-[27px] h-[27px] w-[23px] bg-white">
      <i className="absolute top-[6px] left-[6px] h-0 w-0 border-y-[7px] border-l-[10px] border-y-transparent border-l-[#111]" />
    </span>
    <span className="absolute top-[28px] right-[15px] h-[24px] w-[22px] bg-[#d61f26]" />
    <span className="absolute top-[30px] left-[1791px] text-[22px] leading-[26px] font-light whitespace-nowrap text-[#b5b8bc]">
      QQ3295391197
    </span>
  </div>
);

const App = () => (
  <div className="relative flex h-[1080px] w-[2024px] justify-center overflow-hidden bg-black font-['Liberation_Sans','Noto_Sans_CJK_SC',sans-serif]">
    <div className="flex w-[1920px] shrink-0 flex-col">
      <TitleBar />
      <MenuBar />
      <Ribbon />
      <div className="flex h-[778px] shrink-0">
        <div className="flex min-w-0 flex-1 flex-col">
          <Ruler />
          <Document />
        </div>
        <Scrollbar />
        <SideBar />
      </div>
      <StatusBar />
      <Taskbar />
    </div>
    <div className="absolute top-[11px] left-[55px] h-[84px] w-[12px] rounded-full bg-gradient-to-b from-[#16294f] via-[#5d6468] to-[#4f6a4c]" />
    <div className="absolute top-[220px] left-[1958px] h-[88px] w-[14px] rounded-l-[5px] bg-gradient-to-b from-[#333a4a] via-[#b7bd55] to-[#4f9a98]" />
  </div>
);

export default App;
